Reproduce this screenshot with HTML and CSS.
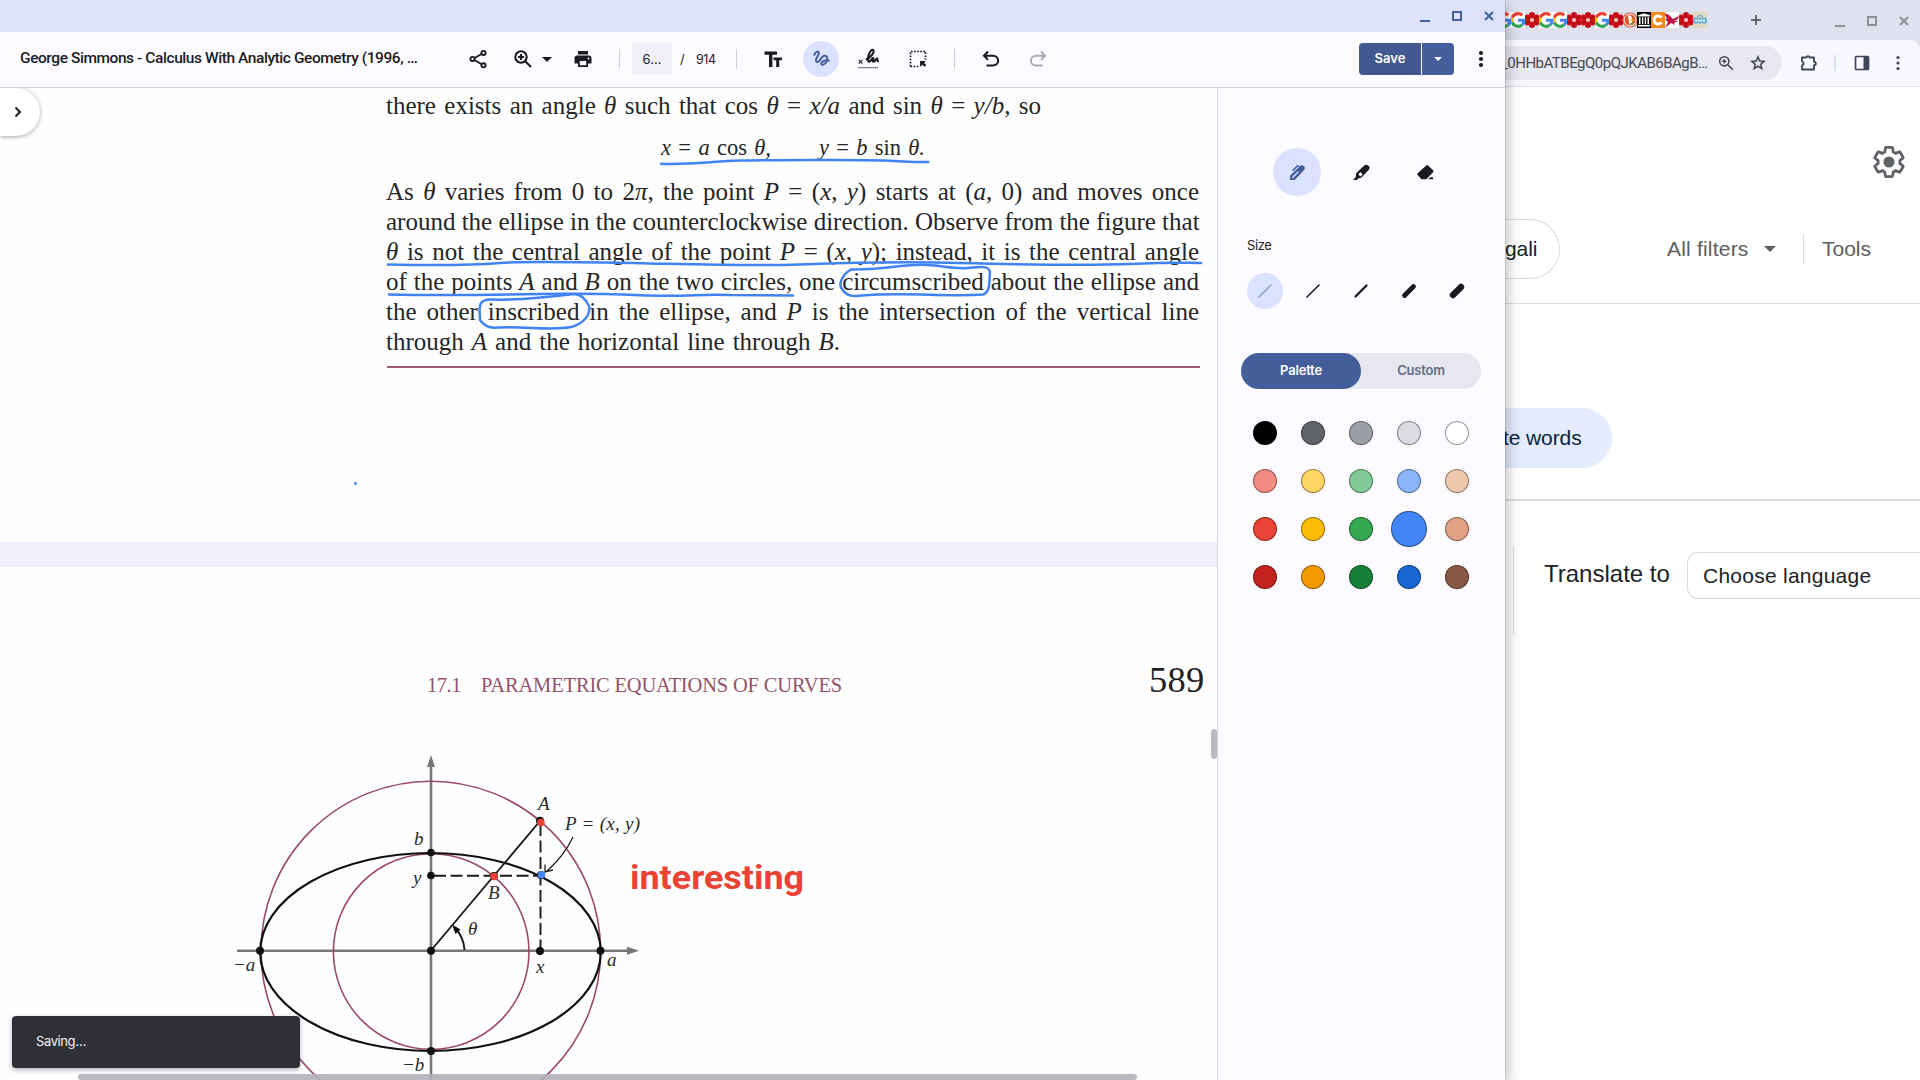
FILE: index.html
```html
<!DOCTYPE html>
<html lang="en">
<head>
<meta charset="utf-8">
<title>Gallery</title>
<link rel="stylesheet" href="styles.css">
</head>
<body>
<svg class="defs" aria-hidden="true">
  <symbol id="g" viewBox="0 0 48 48">
    <rect x="-4" y="-4" width="56" height="56" fill="#fff"/>
    <path fill="#EA4335" d="M24 9.5c3.54 0 6.71 1.22 9.21 3.6l6.85-6.85C35.9 2.38 30.47 0 24 0 14.62 0 6.51 5.38 2.56 13.22l7.98 6.19C12.43 13.72 17.74 9.5 24 9.5z"/>
    <path fill="#4285F4" d="M46.98 24.55c0-1.57-.15-3.09-.38-4.55H24v9.02h12.94c-.58 2.96-2.26 5.48-4.78 7.18l7.73 6c4.51-4.18 7.09-10.36 7.09-17.65z"/>
    <path fill="#FBBC05" d="M10.53 28.59c-.48-1.45-.76-2.99-.76-4.59s.27-3.14.76-4.59l-7.98-6.19C.92 16.46 0 20.12 0 24c0 3.88.92 7.54 2.56 10.78l7.97-6.19z"/>
    <path fill="#34A853" d="M24 48c6.48 0 11.93-2.13 15.89-5.81l-7.73-6c-2.15 1.45-4.92 2.3-8.16 2.3-6.26 0-11.57-4.22-13.47-9.91l-7.98 6.19C6.51 42.62 14.62 48 24 48z"/>
  </symbol>
  <symbol id="flower" viewBox="0 0 16 16">
    <g fill="#d3121c"><circle cx="8" cy="3" r="3"/><circle cx="12.600" cy="5.500" r="3"/><circle cx="12.600" cy="10.500" r="3"/><circle cx="8" cy="13" r="3"/><circle cx="3.400" cy="10.500" r="3"/><circle cx="3.400" cy="5.500" r="3"/><circle cx="8" cy="8" r="4"/></g>
    <path d="M8 1v4M14 4.500l-3.500 2M14 11.500l-3.500-2M8 15v-4M2 11.500l3.500-2M2 4.500l3.500 2" stroke="#7d0a10" stroke-width=".9"/>
    <circle cx="8" cy="8" r="2" fill="#f1c9cc"/>
  </symbol>
</svg>

<div class="browser">
  <div class="tabstrip">
    <div class="favicons">
      <svg class="cut"><use href="#g" x="-9" width="16" height="16"/></svg>
      <svg><use href="#g" x="-1" width="16" height="16"/></svg>
      <svg><use href="#flower" x="-1" width="16" height="16"/></svg>
      <svg><use href="#g" x="-1" width="16" height="16"/></svg>
      <svg><use href="#g" x="-1" width="16" height="16"/></svg>
      <svg><use href="#flower" x="-1" width="16" height="16"/></svg>
      <svg><use href="#flower" x="-1" width="16" height="16"/></svg>
      <svg><use href="#g" x="-1" width="16" height="16"/></svg>
      <svg><use href="#flower" x="-1" width="16" height="16"/></svg>
      <svg viewBox="1 0 14 16"><circle cx="8" cy="8" r="7.500" fill="#de5833"/><circle cx="8" cy="8" r="6" fill="none" stroke="#fff"/><path d="M6 3.500c3-.5 4.500 1.500 4 4l-.5 5.500H7.500z" fill="#fff"/><path d="M8.500 7.500h3.500v1.500H8.500z" fill="#fdb913"/><path d="M8 11h3v2H8z" fill="#4ca84c"/></svg>
      <svg viewBox="1 0 14 16"><path fill="#000" d="M0 0h16v16H0z"/><path fill="#fff" d="M8 1.200l6 2v1.300H2V3.200zM3 5.300h1.500v7H3zM6 5.300h1.300v7H6zM8.800 5.300h1.300v7H8.800zM11.500 5.300H13v7h-1.500zM2 13h12v1.500H2z"/></svg>
      <svg viewBox="1 0 14 16"><path fill="#f28a17" d="M0 0h16v16H0z"/><path d="M11.500 5.600A4.100 4.100 0 1 0 11.500 10.400" fill="none" stroke="#fff" stroke-width="3"/></svg>
      <svg viewBox="1 0 14 16"><path fill="#fff" d="M0 0h16v16H0z"/><path fill="#c4103c" d="M0 1l5 2 4 4 6-3-1 3-4 2 4 0-4 2 1 2-4-2-6 5 3-6-3-3 2 0z"/></svg>
      <svg><use href="#flower" x="-1" width="16" height="16"/></svg>
      <svg viewBox="1 0 14 16"><path fill="#e0dac0" d="M0 0h16v16H0z"/><path d="M5 5l3-2 3 2" fill="none" stroke="#5c9fc4"/><rect x="1" y="5.500" width="14" height="6" rx="1.500" fill="#6caed4"/><path d="M3 8.500h10" stroke="#e8f4fb" stroke-width="2" stroke-dasharray="2 .7"/></svg>
    </div>
    <svg class="newtab" viewBox="0 0 14 14"><path d="M7 2v10M2 7h10" stroke="#44464f" stroke-width="1.500"/></svg>
    <div class="winctl muted"><i class="min"></i><i class="max"></i><svg viewBox="0 0 10 10"><path d="M1 1l8 8M9 1L1 9"/></svg></div>
  </div>
  <div class="omnirow">
    <div class="omnibox">
      <span>_0HHbATBEgQ0pQJKAB6BAgB…</span>
      <svg class="zoomi" viewBox="0 0 16 16"><g fill="none" stroke="#44464f" stroke-width="1.600"><circle cx="6.300" cy="6.300" r="4.600"/><path d="M9.800 9.800l5 5M6.300 4.300v4M4.300 6.300h4"/></g></svg>
      <svg class="star" viewBox="0 0 24 24"><path fill="#44464f" stroke="#44464f" stroke-width=".6" d="M22 9.240l-7.190-.62L12 2 9.190 8.630 2 9.240l5.460 4.730L5.820 21 12 17.270 18.180 21l-1.630-7.030L22 9.240zM12 15.400l-3.760 2.270 1-4.280-3.320-2.880 4.380-.38L12 6.100l1.710 4.040 4.380.38-3.320 2.880 1 4.280L12 15.400z"/></svg>
    </div>
    <svg class="puzzle" viewBox="0 0 18 18"><path d="M2 3.500h4.200a1.900 1.900 0 0 1 3.600 0H14v4.200a1.700 1.700 0 0 1 0 3.600v4.200H2v-3.800a2.300 2.300 0 0 0 0-4.400z" fill="none" stroke="#40455c" stroke-width="1.900" stroke-linejoin="round"/></svg>
    <i class="tbsep"></i>
    <svg class="panelicon" viewBox="0 0 16 16"><rect x="1.500" y="1.500" width="13" height="13" rx="1" fill="none" stroke="#40455c" stroke-width="1.700"/><path fill="#40455c" d="M9.500 1.500h5v13h-5z"/></svg>
    <svg class="dots" viewBox="0 0 6 18" fill="#40455c"><circle cx="3" cy="3.500" r="1.600"/><circle cx="3" cy="9" r="1.600"/><circle cx="3" cy="14.500" r="1.600"/></svg>
  </div>
  <div class="gearrow">
    <svg viewBox="1 1 22 22"><path fill="none" stroke="#5f6368" stroke-width="1.900" d="M19.430 12.980c.04-.32.07-.64.07-.98s-.03-.66-.07-.98l2.110-1.650c.19-.15.24-.42.12-.64l-2-3.460c-.12-.22-.39-.3-.61-.22l-2.490 1c-.52-.4-1.080-.73-1.690-.98l-.38-2.650C14.460 2.180 14.250 2 14 2h-4c-.25 0-.46.18-.49.42l-.38 2.650c-.61.25-1.170.59-1.690.98l-2.490-1c-.23-.09-.49 0-.61.22l-2 3.460c-.13.22-.07.49.12.64l2.110 1.650c-.04.32-.07.65-.07.98s.03.66.07.98l-2.110 1.650c-.19.15-.24.42-.12.64l2 3.460c.12.22.39.3.61.22l2.490-1c.52.4 1.080.73 1.690.98l.38 2.650c.03.24.24.42.49.42h4c.25 0 .46-.18.49-.42l.38-2.650c.61-.25 1.170-.59 1.690-.98l2.490 1c.23.09.49 0 .61-.22l2-3.460c.12-.22.07-.49-.12-.64z"/><circle cx="12" cy="12" r="3.800" fill="#5f6368"/></svg>
  </div>
  <div class="filters">
    <div class="chip">gali</div>
    <div class="allf">All filters</div>
    <i class="caret"></i>
    <i class="fsep"></i>
    <div class="tools">Tools</div>
  </div>
  <div class="words"><div class="pill">te words</div></div>
  <div class="translate">
    <div class="tlabel">Translate to</div>
    <div class="select">Choose language</div>
  </div>
</div>

<div class="app">
  <div class="titlebar">
    <div class="winctl"><i class="min"></i><i class="max"></i><svg viewBox="0 0 10 10"><path d="M1 1l8 8M9 1L1 9"/></svg></div>
  </div>
  <div class="toolbar">
    <div class="title">George Simmons - Calculus With Analytic Geometry (1996, …</div>
    <svg class="ic share" viewBox="0 0 24 24" fill="none" stroke="#1b1b1f" stroke-width="1.900"><circle cx="17.500" cy="6" r="2.100"/><circle cx="6.500" cy="12" r="2.100"/><circle cx="17.500" cy="18.300" r="2.100"/><path d="M8.400 11l7.200-4M8.400 13l7.200 4.200"/></svg>
    <svg class="ic zoomin" viewBox="0 0 24 24" fill="none" stroke="#1b1b1f" stroke-width="2.100"><circle cx="10" cy="10" r="5.700"/><path d="M14.200 14.200l5.800 5.800M10 7v6M7 10h6"/></svg>
    <i class="caret dark"></i>
    <svg class="ic print" viewBox="0 0 24 24"><path fill="#1b1b1f" d="M7 4h10v3.500H7zM18 8.500H6c-1.400 0-2.500 1.100-2.500 2.500v5.500H7V20h10v-3.500h3.500V11c0-1.400-1.100-2.500-2.500-2.500zM15.200 18.200H8.800V14h6.400z"/><circle cx="17.500" cy="11.500" r=".9" fill="#fff"/></svg>
    <i class="sep s1"></i>
    <div class="pagebox">6…</div>
    <span class="slash">/</span>
    <span class="total">914</span>
    <i class="sep"></i>
    <svg class="ic tt" viewBox="0 0 24 24"><path fill="#1b1b1f" d="M3.500 4.500h12.500v3.200h-4.600V20H8V7.700H3.500zM12.500 10.500H21v2.800h-2.800V20h-3v-6.700h-2.700z"/></svg>
    <div class="activeic"><svg class="ic" viewBox="0 0 24 24"><path d="M4 7C5.500 2.500 10 1.800 9.300 5.500 8.500 9 5.500 11 6 14c.8 2.800 3.500 1.500 5-1 1.500-2.600 3-5.500 6-5 3.500.8 3 5.500.8 8.500-2 2.500-5.800 3.500-5.500.8.500-2.800 5.500-4.500 9.200-3.300" fill="none" stroke="#435e9b" stroke-width="2.400" stroke-linecap="round"/></svg></div>
    <svg class="ic sign" viewBox="0 0 24 24" fill="none" stroke="#1b1b1f"><path d="M.8 13l4 4M4.800 13l-4 4" stroke-width="1.200"/><path d="M8.500 12.500c5.500-1.500 10-8.300 8-10.300-2.500-1.200-6 5.500-5.500 11 .6 4.500 3.800-.3 5-2.200 2-1.200-.8 4.200 1.200 4 1.800-.3 2-3.500 3.600-3.600.8.600-.8 3 2 3" stroke-width="2.300"/><path d="M.5 21.500h22" stroke-width="1.300" stroke-dasharray="1.200 1"/></svg>
    <svg class="ic select-ic" viewBox="0 0 24 24" fill="none" stroke="#1b1b1f"><path d="M3 21V3h18v10M3 21h10" stroke-width="2" stroke-dasharray="2 1.700"/><path d="M14.500 14.500h7l-2.200 2.200 2.700 2.700-2 2-2.800-2.600-2.700 2.700z" fill="#1b1b1f" stroke="none"/></svg>
    <i class="sep s3"></i>
    <svg class="ic undo" viewBox="0 0 24 24" fill="none" stroke="#1b1b1f" stroke-width="2.100"><path d="M9 4.500L5 8.700l4 4.200M5.500 8.700h8.700a4.900 4.900 0 0 1 0 9.800H7.500"/></svg>
    <svg class="ic redo" viewBox="0 0 24 24" fill="none" stroke="#a9a9ad" stroke-width="1.900"><path d="M15 4.500l4 4.200-4 4.200M18.500 8.700H9.800a4.900 4.900 0 0 0 0 9.800h6.700"/></svg>
    <div class="save">Save</div>
    <div class="savemenu"><i class="caret light"></i></div>
    <svg class="ic kebab" viewBox="0 0 24 24" fill="#1b1b1f"><circle cx="12" cy="6" r="2.100"/><circle cx="12" cy="12" r="2.100"/><circle cx="12" cy="18" r="2.100"/></svg>
  </div>

  <div class="main">
    <div class="viewer">
      <div class="page page-a">
        <div class="ln first">there exists an angle <em>θ</em> such that cos <em>θ</em> = <em>x/a</em> and sin <em>θ</em> = <em>y/b</em>, so</div>
        <div class="eq"><div class="ln e1"><em>x</em> = <em>a</em> cos <em>θ,</em></div><div class="ln e2"><em>y</em> = <em>b</em> sin <em>θ.</em></div></div>
        <div class="para">
          <div class="ln">As <em>θ</em> varies from 0 to 2<em>π</em>, the point <em>P</em> = (<em>x</em>, <em>y</em>) starts at (<em>a</em>, 0) and moves once</div>
          <div class="ln">around the ellipse in the counterclockwise direction. Observe from the figure that</div>
          <div class="ln"><em>θ</em> is not the central angle of the point <em>P</em> = (<em>x</em>, <em>y</em>); instead, it is the central angle</div>
          <div class="ln">of the points <em>A</em> and <em>B</em> on the two circles, one circumscribed about the ellipse and</div>
          <div class="ln">the other inscribed in the ellipse, and <em>P</em> is the intersection of the vertical line</div>
          <div class="ln last">through <em>A</em> and the horizontal line through <em>B</em>.</div>
        </div>
        <div class="rule"></div>
        <svg class="ink" viewBox="0 88 1217 454" fill="none" stroke="#3f83f5" stroke-width="2.500" stroke-linecap="round" stroke-linejoin="round">
          <path d="M661 163.700C690 165 715 161 740 160.600S860 159.500 885 160.500S905 162 928 162"/>
          <path d="M388 264.500C430 265.500 475 265 500 263S600 262.500 650 263.500S760 266 800 264.500S900 261.500 960 263S1080 266 1130 264S1180 263 1201 263"/>
          <path d="M389 294.500C430 295.500 490 295 540 294S610 294 650 295.500S700 293.500 730 295L793 295.400"/>
          <path d="M851 269.500C842 275 838 284 842 289C847 297 854 296.500 862 295.500C900 292 950 297 983 294.500C991 292 989 280 990 272C989 266 981 266.500 972 267.500C958 270 945 266 928 265C905 263 890 270 851 269.500"/>
          <path d="M574 294C550 297 520 300.500 492 299.500C476 299 480 309 480 320C484 326 490 328.500 498 327.500C525 326 552 331 571 327C583 324 591 315 589 306C586 300 581 294 574 294"/>
          <path d="M355.500 483.500v.1" stroke-width="2.800"/>
        </svg>
      </div>
      <div class="page page-b">
        <div class="head"><span class="secno">17.1</span><span class="secname">PARAMETRIC EQUATIONS OF CURVES</span><span class="pno">589</span></div>
        <svg class="figure" viewBox="0 740 1217 340">
          <g stroke="#77777b" stroke-width="2.600"><path d="M431 762V1080M237 950.700H630"/></g>
          <path fill="#77777b" d="M431 755l-4 12h8zM639 950.700l-12-4v8z"/>
          <g fill="none" stroke="#9b4a65" stroke-width="1.600"><circle cx="430.800" cy="951" r="169.800"/><circle cx="431.200" cy="951.500" r="97.800"/></g>
          <ellipse cx="430.500" cy="952" rx="170.300" ry="99" fill="none" stroke="#111" stroke-width="2.200"/>
          <g fill="none" stroke="#1a1a1a" stroke-width="1.900">
            <path d="M431 950.500L540 821"/>
            <path d="M434 875.800H541M540.500 824V948" stroke-dasharray="12 4.500"/>
            <path d="M573 837C566 852 555 864 546 872M545 864.500v7.500l8-2" stroke-width="1.300"/>
            <path d="M464.500 950C464 941 460 933 455 928"/>
          </g>
          <path fill="#111" d="M452 924.500l8.500 5-5 4.500z"/>
          <g fill="#111"><circle cx="431" cy="852.500" r="3.800"/><circle cx="431" cy="875.500" r="3.800"/><circle cx="431" cy="950.700" r="4"/><circle cx="260" cy="950.700" r="4"/><circle cx="600.500" cy="950.700" r="4"/><circle cx="540" cy="951" r="4"/><circle cx="431" cy="1051" r="4"/><circle cx="540" cy="820.700" r="4"/><circle cx="494" cy="876" r="4"/><circle cx="541" cy="875" r="4"/></g>
          <g fill="#ea4335"><circle cx="541" cy="822.500" r="3.800"/><circle cx="494" cy="876.500" r="3.800"/></g>
          <circle cx="541.500" cy="874.800" r="3.800" fill="#4285f4"/>
          <g class="lbl">
            <text x="538" y="810">A</text><text x="565" y="830" textLength="75">P = (x, y)</text>
            <text x="414" y="845">b</text><text x="413" y="884">y</text><text x="488" y="899">B</text>
            <text x="468" y="935">θ</text><text x="233" y="971">−a</text><text x="536" y="973">x</text>
            <text x="607" y="966">a</text><text x="402" y="1071">−b</text>
          </g>
          <text class="note" x="630" y="889" textLength="174" lengthAdjust="spacingAndGlyphs">interesting</text>
        </svg>
      </div>
      <div class="expand"><svg viewBox="0 0 10 12"><path d="M2.500 1.500L7 6l-4.500 4.500" fill="none" stroke="#1b1b1f" stroke-width="1.900"/></svg></div>
      <div class="vthumb"></div>
      <div class="hthumb"></div>
      <div class="toast">Saving…</div>
    </div>

    <div class="panel">
      <div class="toolsrow">
        <div class="tool on"><svg viewBox="0 0 24 24"><path fill="#435e9b" d="M2.500 21.500V16L13.500 5.500l-1-1L6.500 10.500 5 9l6-6q1-.8 2 0l1.500 1.500 1-1q2-1.500 4.500.5t.5 4.500L8.500 21.500z"/><path d="M5.500 18.500l7.500-7.500" stroke="#dae2ff" stroke-width="1.800"/></svg></div>
        <div class="tool"><svg viewBox="0 0 24 24"><path fill="#1b1b1f" d="M1.500 21.500L5.200 17c-1-2.500 0-4 1.500-5.500L15.500 3q2.500-2 5.300.5t.2 5.300L13 17.500c-1.500 1.500-3 2.500-5 1.500L6.500 21.500z"/><path fill="#fdfbff" d="M10.500 11.500l3 3-3 2.500-2.500-2.500z"/></svg></div>
        <div class="tool"><svg viewBox="0 0 24 24"><path fill="#1b1b1f" d="M13 3q1.200-1 2.400 0l6.200 6.200q1 1.200 0 2.400l-8.500 8.900H7l-5-5.300q-1-1.200 0-2.400zM15.500 20.500l2.500-2.500h3.500v2.500z"/></svg></div>
      </div>
      <div class="label">Size</div>
      <div class="sizes">
        <div class="size on"><svg viewBox="0 0 18 18"><path d="M3 15L15 3" stroke="#8394c4" stroke-width="1.300"/></svg></div>
        <div class="size"><svg viewBox="0 0 18 18"><path d="M3 15L15 3" stroke="#1b1b1f" stroke-width="1.600"/></svg></div>
        <div class="size"><svg viewBox="0 0 18 18"><path d="M3.500 14.500L14.500 3.500" stroke="#1b1b1f" stroke-width="2.300"/></svg></div>
        <div class="size"><svg viewBox="0 0 18 18"><path d="M4.500 13.500L13.500 4.500" stroke="#1b1b1f" stroke-width="4.800"/></svg></div>
        <div class="size"><svg viewBox="0 0 18 18"><path d="M5 13L13 5" stroke="#1b1b1f" stroke-width="6.400"/></svg></div>
      </div>
      <div class="toggle"><div class="seg on">Palette</div><div class="seg">Custom</div></div>
      <div class="swatches">
        <i style="background:#000"></i><i style="background:#5f6368"></i><i style="background:#9aa0a6"></i><i style="background:#dadce0"></i><i style="background:#fff"></i>
        <i style="background:#f28b82"></i><i style="background:#fdd663"></i><i style="background:#81c995"></i><i style="background:#8ab4f8"></i><i style="background:#eec9ae"></i>
        <i style="background:#ea4335"></i><i style="background:#fbbc04"></i><i style="background:#34a853"></i><i class="big" style="background:#4285f4"></i><i style="background:#e2a185"></i>
        <i style="background:#c5221f"></i><i style="background:#f29900"></i><i style="background:#188038"></i><i style="background:#1967d2"></i><i style="background:#885945"></i>
      </div>
    </div>
  </div>
</div>
</body>
</html>
```
FILE: styles.css
```css
* { box-sizing: border-box; }
body { margin: 0; width: 1920px; height: 1080px; overflow: hidden; position: relative; background: #fff; font-family: Inter, Roboto, sans-serif; }
svg { display: block; flex: none; }
i { display: block; flex: none; }
.defs { position: absolute; width: 0; height: 0; }

/* window controls */
.winctl { display: flex; gap: 22px; color: #435e9b; height: 10px; }
.winctl .min { width: 10px; height: 2px; margin-top: 8.500px; background: currentColor; }
.winctl .max { width: 10px; height: 10px; border: 2px solid currentColor; }
.winctl svg { width: 10px; height: 10px; stroke: currentColor; stroke-width: 2; }
.winctl.muted { color: #8f9098; }

/* browser window in the back */
.browser { position: absolute; left: 1505px; top: 0; width: 415px; height: 1080px; overflow: hidden; background: #fff; font-family: "Liberation Sans", Arial, sans-serif; }
.tabstrip { height: 40px; background: #dfe1ee; display: flex; align-items: center; }
.favicons { display: flex; }
.favicons svg { width: 14px; height: 16px; background: #d9dae2; }
.favicons svg.cut { width: 6px; }
.newtab { width: 14px; height: 14px; margin-left: 42px; }
.winctl.muted { margin-left: 72px; margin-top: 2px; }
.omnirow { height: 47px; background: #f9f8fe; border-bottom: 1px solid #dfe0ec; border-top-right-radius: 10px; box-shadow: 10px -10px 0 #dfe1ee; display: flex; align-items: center; }
.omnibox { width: 277px; height: 34px; background: #e8e8f1; border-radius: 0 17px 17px 0; display: flex; align-items: center; margin-top: -1px; font: 15px Roboto, sans-serif; color: #474952; }
.omnibox span { width: 207px; margin-left: -4px; white-space: nowrap; letter-spacing: -.5px; }
.zoomi { width: 16px; height: 16px; margin-left: 10px; }
.star { width: 18px; height: 18px; margin-left: 15px; }
.puzzle { width: 18px; height: 18px; margin-left: 18px; }
.tbsep { width: 2px; height: 16px; background: #d5e2fb; margin-left: 16px; }
.panelicon { width: 16px; height: 16px; margin-left: 18px; }
.dots { width: 6px; height: 18px; margin-left: 25px; }
.gearrow { height: 132px; padding: 59px 15px 0 0; display: flex; justify-content: flex-end; }
.gearrow svg { width: 32px; height: 32px; }
.filters { height: 85px; border-bottom: 1px solid #dadce0; display: flex; align-items: flex-start; font-size: 21px; line-height: 60px; color: #5e5e5e; }
.chip { width: 55px; height: 60px; border: 1px solid #dadce0; border-left: 0; border-radius: 0 30px 30px 0; line-height: 58px; color: #202124; letter-spacing: -.1px; }
.allf { margin-left: 107px; letter-spacing: .2px; width: 82px; white-space: nowrap; }
.caret { width: 0; height: 0; border: 6px solid transparent; border-top-color: #5e5e5e; border-bottom: 0; }
.filters .caret { margin: 27px 0 0 15px; }
.fsep { width: 1px; height: 30px; background: #dadce0; margin: 15px 0 0 27px; }
.tools { margin-left: 18px; }
.words { height: 197px; border-bottom: 2px solid #dadce0; padding-top: 104px; }
.pill { width: 107px; height: 60px; background: #e5ecff; color: #0a2540; border-radius: 0 30px 30px 0; line-height: 60px; font-size: 21px; white-space: nowrap; text-indent: -2px; letter-spacing: -.1px; }
.translate { margin: 45px 0 0 8px; height: 88px; border-left: 1px solid #dadce0; display: flex; }
.tlabel { width: 173px; padding-left: 30px; font-size: 24px; line-height: 56px; white-space: nowrap; color: #202124; }
.select { flex: 1; height: 47px; margin-top: 6px; border: 1px solid #dadce0; border-right: 0; border-radius: 11px 0 0 11px; padding-left: 15px; font-size: 21px; line-height: 46px; letter-spacing: .25px; color: #202124; }

/* gallery window */
.app { position: absolute; left: 0; top: 0; width: 1505px; height: 1080px; background: #fdfbff; box-shadow: 0 0 1px rgba(0,0,0,.5), 2px 4px 14px rgba(0,0,0,.28); display: flex; flex-direction: column; }
.titlebar { height: 32px; background: #dde1fb; display: flex; justify-content: flex-end; padding: 11px 11px 0 0; }
.toolbar { height: 56px; border-bottom: 1px solid #cfd0d8; display: flex; align-items: center; padding: 0 0 1px 20px; color: #1b1b1f; }
.title { width: 398px; font: 500 15.500px Roboto, sans-serif; white-space: nowrap; letter-spacing: -.43px; margin-top: -2px; }
.ic { width: 24px; height: 24px; }
.share { margin-left: 48px; }
.zoomin { margin-left: 21px; }
.caret.dark { border-width: 5px 5px 0; border-top-color: #1b1b1f; margin-left: 7px; }
.print { margin-left: 19px; }
.sep { width: 1px; height: 20px; background: #d0d0d8; }
.s1 { margin-left: 24px; }
.pagebox { width: 40px; height: 32px; margin-left: 12px; background: #f0f0f6; border-radius: 4px; text-align: center; font-size: 13px; line-height: 33px; }
.slash { font-size: 13px; width: 16px; margin-left: 8px; }
.total { font-size: 12.500px; width: 40px; letter-spacing: -.4px; }
.tt { margin-left: 24px; }
.activeic { width: 36px; height: 36px; border-radius: 50%; background: #dae2ff; margin-left: 18px; display: flex; align-items: center; justify-content: center; }
.activeic .ic { width: 20px; height: 20px; }
.sign { margin-left: 19px; width: 22px; height: 22px; }
.select-ic { margin-left: 28px; width: 20px; height: 20px; }
.s3 { margin-left: 26px; }
.undo { margin-left: 24px; }
.redo { margin-left: 23px; }
.save { width: 62px; height: 32px; margin-left: 309px; background: #415891; border-radius: 4px 0 0 4px; color: #fff; font-size: 13px; font-weight: 600; line-height: 31px; text-align: center; }
.savemenu { width: 32px; height: 32px; margin-left: 1px; background: #435e9b; border-radius: 0 4px 4px 0; display: flex; align-items: center; justify-content: center; }
.caret.light { border-width: 4px 4px 0; border-top-color: #fff; }
.kebab { margin-left: 15px; }
.main { height: 992px; display: flex; }

/* document */
.viewer { width: 1217px; height: 992px; position: relative; overflow: hidden; background: #eeeffa; }
.page { background: #fefefe; font-family: "Liberation Serif", "Times New Roman", serif; color: #262626; }
.page-a { height: 454px; padding: 3px 18px 0 386px; position: relative; }
.ln { height: 30px; font-size: 25px; line-height: 30px; white-space: nowrap; text-align: justify; text-align-last: justify; }
.first { width: 655px; }
.eq { display: flex; padding-left: 275px; gap: 48px; margin-top: 12px; }
.eq .ln { font-size: 22.500px; }
.e1 { width: 110px; }
.e2 { width: 106px; }
.para { margin-top: 14px; width: 813px; }
.para .ln { height: 30.100px; }
.last { width: 454px; }
.rule { height: 2px; background: #a35a70; margin: 8px 0 0 1px; width: 813px; }
.ink { position: absolute; left: 0; top: 0; width: 1217px; height: 454px; }
.page-b { margin-top: 25px; height: 513px; }
.head { height: 173px; padding: 93px 0 0 427px; display: flex; align-items: baseline; }
.head span { line-height: 40px; white-space: nowrap; }
.secno, .secname { font-size: 20.500px; color: #93536b; }
.secno { width: 54px; letter-spacing: -.5px; }
.secname { width: 668px; letter-spacing: -.17px; }
.pno { font-size: 36.500px; color: #222; letter-spacing: .3px; }
.figure { width: 1217px; height: 340px; }
.lbl { font-style: italic; font-size: 19px; fill: #2a2a2a; }
.note { font: 700 34px Roboto, sans-serif; fill: #ea4335; }
.expand { position: absolute; left: 0; top: 0; width: 40px; height: 48px; background: #fff; border-radius: 0 24px 24px 0; box-shadow: 0 1px 4px rgba(0,0,0,.35); padding: 18px 0 0 13px; }
.expand svg { width: 10px; height: 12px; }
.vthumb { position: absolute; left: 1211px; top: 641px; width: 6px; height: 30px; border-radius: 3px; background: #b9b9c2; }
.hthumb { position: absolute; left: 78px; top: 986px; width: 1059px; height: 6px; border-radius: 3px; background: rgba(175,175,184,.87); }
.toast { position: absolute; left: 12px; top: 928px; width: 288px; height: 52px; border-radius: 4px; background: #2f3036; color: #f1f0f4; font-size: 13px; line-height: 51px; padding-left: 24px; letter-spacing: -.4px; box-shadow: 0 2px 5px rgba(0,0,0,.3); }

/* annotation panel */
.panel { width: 288px; border-left: 1px solid #d6d6de; padding: 60px 24px 0 23px; }
.toolsrow { display: flex; gap: 16px; padding-left: 32px; }
.tool { width: 48px; height: 48px; border-radius: 50%; display: flex; align-items: center; justify-content: center; }
.tool svg { width: 19px; height: 19px; }
.on { background: #dae2ff; }
.label { margin: 40px 0 0 6px; font-size: 13px; line-height: 18px; color: #1b1b1f; letter-spacing: -.4px; }
.sizes { display: flex; gap: 12px; margin: 19px 0 0 6px; }
.size { width: 36px; height: 36px; border-radius: 50%; display: flex; align-items: center; justify-content: center; }
.size svg { width: 18px; height: 18px; stroke-linecap: round; }
.toggle { display: flex; width: 240px; height: 36px; margin-top: 44px; border-radius: 18px; background: #e6e7ef; }
.seg { flex: 1; text-align: center; border-radius: 18px; font-size: 13px; font-weight: 600; letter-spacing: -.2px; line-height: 35px; color: #666b80; }
.seg.on { background: #435e9b; color: #fff; }
.swatches { display: grid; grid-template-columns: repeat(5, 48px); grid-auto-rows: 48px; place-items: center; margin-top: 20px; }
.swatches i { width: 24px; height: 24px; border-radius: 50%; border: 1px solid rgba(0,0,0,.42); }
.swatches .big { width: 36px; height: 36px; }
```
